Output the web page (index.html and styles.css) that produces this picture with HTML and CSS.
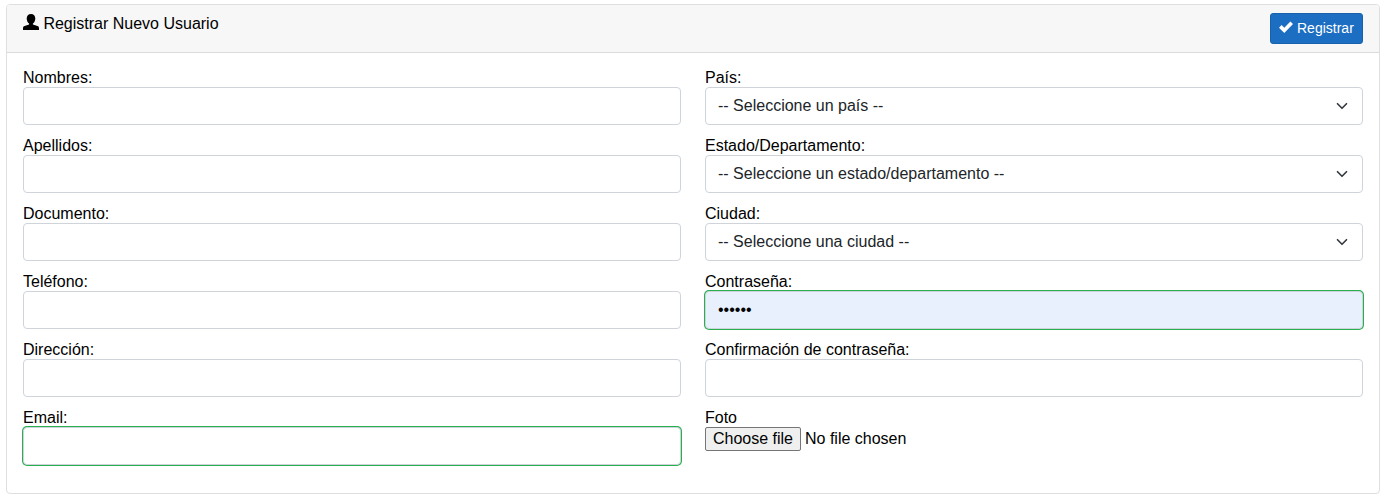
FILE: index.html
```html
<!DOCTYPE html>
<html lang="es">
<head>
<meta charset="utf-8">
<title>Registrar Nuevo Usuario</title>
<link rel="stylesheet" href="styles.css">
</head>
<body>
<form class="card">
  <div class="card-header">
    <div class="title"><svg class="user-icon" viewBox="0 0 16 16"><path d="M8 0C10.700 0 12.300 1.900 12.300 4.500C12.300 6.700 11.300 8.600 9.900 9.600V10.500L14.400 12.100C15.500 12.500 16 13.200 16 14.200V16H0V14.200C0 13.200.5 12.500 1.600 12.100L6.100 10.500V9.600C4.700 8.600 3.700 6.700 3.700 4.500C3.700 1.900 5.300 0 8 0Z"/></svg><span>Registrar Nuevo Usuario</span></div>
    <button type="button" class="btn"><svg class="check-icon" viewBox="0 0 14 12"><path d="M0 6.700L2.600 4.100L5.300 6.700L11.400.4L14 3L5.300 11.900Z"/></svg><span>Registrar</span></button>
  </div>
  <div class="card-body">
    <div class="column">
      <div class="field"><label for="nombres">Nombres:</label><input class="control" id="nombres" type="text"></div>
      <div class="field"><label for="apellidos">Apellidos:</label><input class="control" id="apellidos" type="text"></div>
      <div class="field"><label for="documento">Documento:</label><input class="control" id="documento" type="text"></div>
      <div class="field"><label for="telefono">Teléfono:</label><input class="control" id="telefono" type="text"></div>
      <div class="field"><label for="direccion">Dirección:</label><input class="control" id="direccion" type="text"></div>
      <div class="field"><label for="email">Email:</label><input class="control valid" id="email" type="email"></div>
    </div>
    <div class="column">
      <div class="field"><label>País:</label><div class="control select"><span>-- Seleccione un país --</span><svg class="chevron" viewBox="0 0 16 16"><path d="M2 5l6 6 6-6"/></svg></div></div>
      <div class="field"><label>Estado/Departamento:</label><div class="control select"><span>-- Seleccione un estado/departamento --</span><svg class="chevron" viewBox="0 0 16 16"><path d="M2 5l6 6 6-6"/></svg></div></div>
      <div class="field"><label>Ciudad:</label><div class="control select"><span>-- Seleccione una ciudad --</span><svg class="chevron" viewBox="0 0 16 16"><path d="M2 5l6 6 6-6"/></svg></div></div>
      <div class="field"><label for="clave">Contraseña:</label><input class="control valid autofilled" id="clave" type="password" value="123456"></div>
      <div class="field"><label for="clave2">Confirmación de contraseña:</label><input class="control" id="clave2" type="password"></div>
      <div class="field"><label>Foto</label><div class="file"><button type="button" class="file-btn">Choose file</button><span>No file chosen</span></div></div>
    </div>
  </div>
</form>
</body>
</html>
```
FILE: styles.css
```css
* { box-sizing: border-box; }

body {
  margin: 0;
  padding: 4px 7px 6px 6px;
  background: #fff;
  color: #000;
  font: 16px/18px "Liberation Sans", Arial, sans-serif;
}

.card {
  height: 490px;
  border: 1px solid #dfdfdf;
  border-radius: 4px;
  overflow: hidden;
}

.card-header {
  display: flex;
  justify-content: space-between;
  align-items: flex-start;
  height: 48px;
  padding: 8px 16px;
  background: #f7f7f7;
  border-bottom: 1px solid #dbdbdb;
}

.title {
  display: flex;
  align-items: flex-start;
  gap: 4.4px;
  padding-top: 1px;
}

.title span { padding-top: 1px; }

.user-icon { width: 16px; height: 16px; }

.btn {
  display: flex;
  align-items: center;
  gap: 4px;
  width: 93px;
  height: 31px;
  padding: 0 8px;
  border: 1px solid #1861ac;
  border-radius: 3px;
  background: #1b6ec2;
  color: #fff;
  font: 14px/21px "Liberation Sans", Arial, sans-serif;
}

.check-icon {
  width: 14px;
  height: 12px;
  margin-bottom: 3px;
  fill: #fff;
  flex: none;
}

.card-body {
  display: grid;
  grid-template-columns: 1fr 1fr;
  gap: 24px;
  padding: 16px;
}

.column {
  display: flex;
  flex-direction: column;
  gap: 12px;
}

.field {
  display: flex;
  flex-direction: column;
}

.control {
  width: 100%;
  height: 38px;
  padding: 6px 12px;
  border: 1px solid #ced4da;
  border-radius: 4px;
  outline: none;
  background: #fff;
  color: #212529;
  font: 16px/24px "Liberation Sans", Arial, sans-serif;
}

.select {
  display: flex;
  justify-content: space-between;
  align-items: center;
}

.chevron {
  width: 12px;
  height: 12px;
  margin-right: 2px;
  fill: none;
  stroke: #343a40;
  stroke-width: 2.2;
  stroke-linecap: round;
  stroke-linejoin: round;
}

.valid { box-shadow: 0 0 0 1px #26b050; }

.autofilled {
  background: #e8f0fe;
  color: #000;
}

.file {
  display: flex;
  gap: 4px;
  line-height: 24px;
}

.file-btn {
  width: 96px;
  height: 24px;
  padding: 0;
  border: 1px solid #767676;
  border-radius: 2px;
  background: #efefef;
  color: #000;
  font: 16px/20px "Liberation Sans", Arial, sans-serif;
}
```
